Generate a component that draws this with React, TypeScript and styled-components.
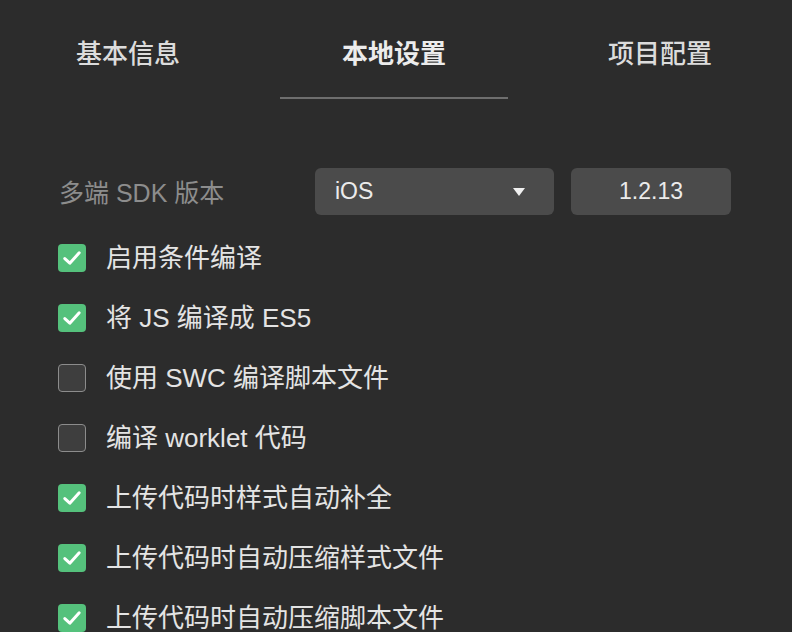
import React from 'react';
import styled, {createGlobalStyle} from "styled-components";

const GlobalStyle = createGlobalStyle`
  html, body {
    margin: 0;
    padding: 0;
    background-color: #2c2c2c;
  }

  body {
    font-family: "Liberation Sans", "Noto Sans CJK SC", sans-serif;
    color: #e2e2e2;
    overflow: hidden;
  }
`

type OptionType = {
    label: string
    checked: boolean
}

const options: OptionType[] = [
    {label: '启用条件编译', checked: true},
    {label: '将 JS 编译成 ES5', checked: true},
    {label: '使用 SWC 编译脚本文件', checked: false},
    {label: '编译 worklet 代码', checked: false},
    {label: '上传代码时样式自动补全', checked: true},
    {label: '上传代码时自动压缩样式文件', checked: true},
    {label: '上传代码时自动压缩脚本文件', checked: true},
]

const tabs = ['基本信息', '本地设置', '项目配置']

export default function App() {
    return (
        <Page>
            <GlobalStyle/>
            <Tabs>
                {tabs.map((t, i) => (
                    <Tab key={t} active={i === 1}>{t}</Tab>
                ))}
            </Tabs>
            <Content>
                <SdkRow>
                    <SdkLabel>多端 SDK 版本</SdkLabel>
                    <Select>
                        <span>iOS</span>
                        <Caret/>
                    </Select>
                    <Version>1.2.13</Version>
                </SdkRow>
                {options.map(o => (
                    <OptionRow key={o.label}>
                        <Checkbox checked={o.checked}>
                            {o.checked && (
                                <svg width="22" height="22" viewBox="0 0 22 22">
                                    <path d="M3.8 11.6 L8.8 16.2 L18.2 5.8" fill="none" stroke="#fff"
                                          strokeWidth="3" strokeLinecap="round" strokeLinejoin="round"/>
                                </svg>
                            )}
                        </Checkbox>
                        <OptionLabel>{o.label}</OptionLabel>
                    </OptionRow>
                ))}
            </Content>
        </Page>
    );
}

const Page = styled.div`
  width: 792px;
  height: 632px;
  background-color: #2c2c2c;
`

const Tabs = styled.div`
  display: grid;
  grid-template-columns: repeat(3, 266px);
  margin-left: -5px;
  padding-top: 26px;
`

const Tab = styled.div<{ active?: boolean }>`
  position: relative;
  height: 73px;
  text-align: center;
  font-family: "Noto Sans CJK SC", sans-serif;
  font-size: 26px;
  line-height: 52px;
  font-weight: ${p => p.active ? 700 : 500};
  color: ${p => p.active ? '#ececec' : '#dcdcdc'};

  &::after {
    content: '';
    display: ${p => p.active ? 'block' : 'none'};
    position: absolute;
    left: 19px;
    right: 19px;
    bottom: 0;
    height: 2px;
    background-color: #6e6e6e;
  }
`

const Content = styled.div`
  padding: 69px 0 0 58px;
`

const SdkRow = styled.div`
  display: flex;
  align-items: center;
  height: 47px;
  margin-bottom: 13px;
`

const SdkLabel = styled.div`
  width: 256px;
  margin-bottom: 2px;
  font-size: 25px;
  color: #8d8d8d;
  padding-left: 1px;
`

const Select = styled.div`
  display: flex;
  align-items: center;
  justify-content: space-between;
  box-sizing: border-box;
  width: 239px;
  height: 47px;
  padding: 0 29px 0 20px;
  border-radius: 6px;
  background-color: #4b4b4b;
  font-size: 23px;
  color: #ebebeb;
`

const Caret = styled.span`
  width: 0;
  height: 0;
  border-left: 6px solid transparent;
  border-right: 6px solid transparent;
  border-top: 8px solid #f0f0f0;
`

const Version = styled.div`
  box-sizing: border-box;
  width: 160px;
  height: 47px;
  margin-left: 17px;
  border-radius: 6px;
  background-color: #4b4b4b;
  font-size: 23px;
  line-height: 47px;
  text-align: center;
  color: #ebebeb;
`

const OptionRow = styled.div`
  display: flex;
  align-items: center;
  height: 60px;
`

const Checkbox = styled.div<{ checked: boolean }>`
  display: flex;
  align-items: center;
  justify-content: center;
  box-sizing: border-box;
  width: 28px;
  height: 28px;
  border-radius: 4px;
  background-color: ${p => p.checked ? '#55c17c' : '#3e3e3e'};
  border: ${p => p.checked ? 'none' : '1px solid #8c8c8c'};
`

const OptionLabel = styled.span`
  margin-left: 20px;
  margin-bottom: 5px;
  font-size: 26px;
  color: #e4e4e4;
`
